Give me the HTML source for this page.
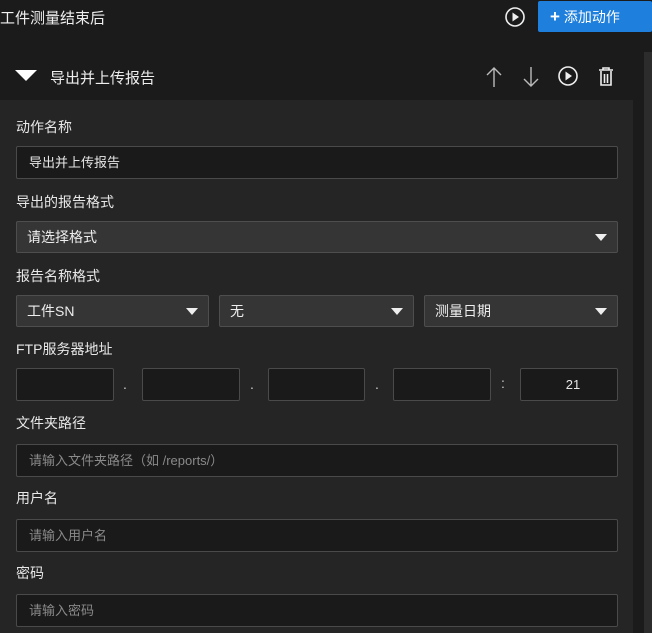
<!DOCTYPE html>
<html><head><meta charset="utf-8"><style>
*{box-sizing:border-box;margin:0;padding:0}
body{width:652px;height:633px;overflow:hidden;background:#1b1b1b;font-family:"Liberation Sans","Noto Sans CJK SC",sans-serif;color:#e6e6e6;position:relative;font-size:14px}
.a{position:absolute}
.title{left:0;top:7px;font-size:15px;color:#f0f0f0}
.btn{left:538px;top:1px;width:114px;height:31px;background:#1f7fdc;border-radius:2px;color:#fff;font-size:14px;line-height:31px;padding-left:12px}
.sec{left:50px;top:67px;font-size:15px;color:#eee}
.panel{left:0;top:100px;width:633px;height:533px;background:#252525}
.sb{left:644px;top:52px;width:8px;height:581px;background:#2c2c2c}
.lbl{left:16px;font-size:14px;color:#e8e8e8}
.in{height:33px;background:#1a1a1a;border:1px solid #4a4a4a;border-radius:2px;font-size:13px;line-height:31px;padding-left:12px;color:#e6e6e6}
.ph{color:#8a8a8a}
.sel{height:32px;background:#353535;border:1px solid #4e4e4e;border-radius:2px;font-size:14px;line-height:30px;padding-left:10px;color:#eee}
.sel:after{content:"";position:absolute;right:10px;top:12px;border-left:6px solid transparent;border-right:6px solid transparent;border-top:7px solid #eee}
.dot{font-size:14px;color:#ccc}
</style></head><body>
<div class="a title">工件测量结束后</div>
<svg class="a" style="left:504px;top:6px" width="22" height="22" viewBox="0 0 22 22"><circle cx="11" cy="11" r="9" fill="none" stroke="#eee" stroke-width="1.6"/><path d="M8.5 6.5v9l6.5-4.5z" fill="#eee"/></svg>
<div class="a btn"><b style="font-size:17px">+</b> 添加动作</div>
<div class="a sb"></div>
<svg class="a" style="left:15px;top:70px" width="22" height="12"><path d="M0 0h22L11 11z" fill="#fff"/></svg>
<div class="a sec">导出并上传报告</div>
<svg class="a" style="left:484px;top:66px" width="20" height="22"><path d="M10 21V2M3 9l7-7 7 7" fill="none" stroke="#bbb" stroke-width="1.4"/></svg>
<svg class="a" style="left:521px;top:66px" width="20" height="22"><path d="M10 1v19M3 13l7 7 7-7" fill="none" stroke="#bbb" stroke-width="1.4"/></svg>
<svg class="a" style="left:557px;top:65px" width="22" height="22" viewBox="0 0 22 22"><circle cx="11" cy="11" r="9" fill="none" stroke="#eee" stroke-width="1.6"/><path d="M8.5 6.5v9l6.5-4.5z" fill="#eee"/></svg>
<svg class="a" style="left:597px;top:66px" width="18" height="21"><path d="M2 4h14M6 4V2h6v2M4 5v14h10V5M7.5 8v9M10.5 8v9" fill="none" stroke="#eee" stroke-width="1.6"/></svg>
<div class="a panel"></div>
<div class="a lbl" style="top:117px">动作名称</div>
<div class="a in" style="left:16px;top:146px;width:602px">导出并上传报告</div>
<div class="a lbl" style="top:192px">导出的报告格式</div>
<div class="a sel" style="left:16px;top:221px;width:602px">请选择格式</div>
<div class="a lbl" style="top:266px">报告名称格式</div>
<div class="a sel" style="left:16px;top:295px;width:193px">工件SN</div>
<div class="a sel" style="left:219px;top:295px;width:195px">无</div>
<div class="a sel" style="left:424px;top:295px;width:194px">测量日期</div>
<div class="a lbl" style="top:339px">FTP服务器地址</div>
<div class="a in" style="left:16px;top:368px;width:98px"></div>
<div class="a dot" style="left:123px;top:376px">.</div>
<div class="a in" style="left:142px;top:368px;width:98px"></div>
<div class="a dot" style="left:250px;top:376px">.</div>
<div class="a in" style="left:268px;top:368px;width:97px"></div>
<div class="a dot" style="left:375px;top:376px">.</div>
<div class="a in" style="left:393px;top:368px;width:98px"></div>
<div class="a dot" style="left:501px;top:375px">:</div>
<div class="a in" style="left:520px;top:368px;width:98px;text-align:center;padding:0 0 0 8px">21</div>
<div class="a lbl" style="top:413px">文件夹路径</div>
<div class="a in ph" style="left:16px;top:444px;width:602px">请输入文件夹路径（如 /reports/）</div>
<div class="a lbl" style="top:488px">用户名</div>
<div class="a in ph" style="left:16px;top:519px;width:602px">请输入用户名</div>
<div class="a lbl" style="top:563px">密码</div>
<div class="a in ph" style="left:16px;top:594px;width:602px">请输入密码</div>
</body></html>
